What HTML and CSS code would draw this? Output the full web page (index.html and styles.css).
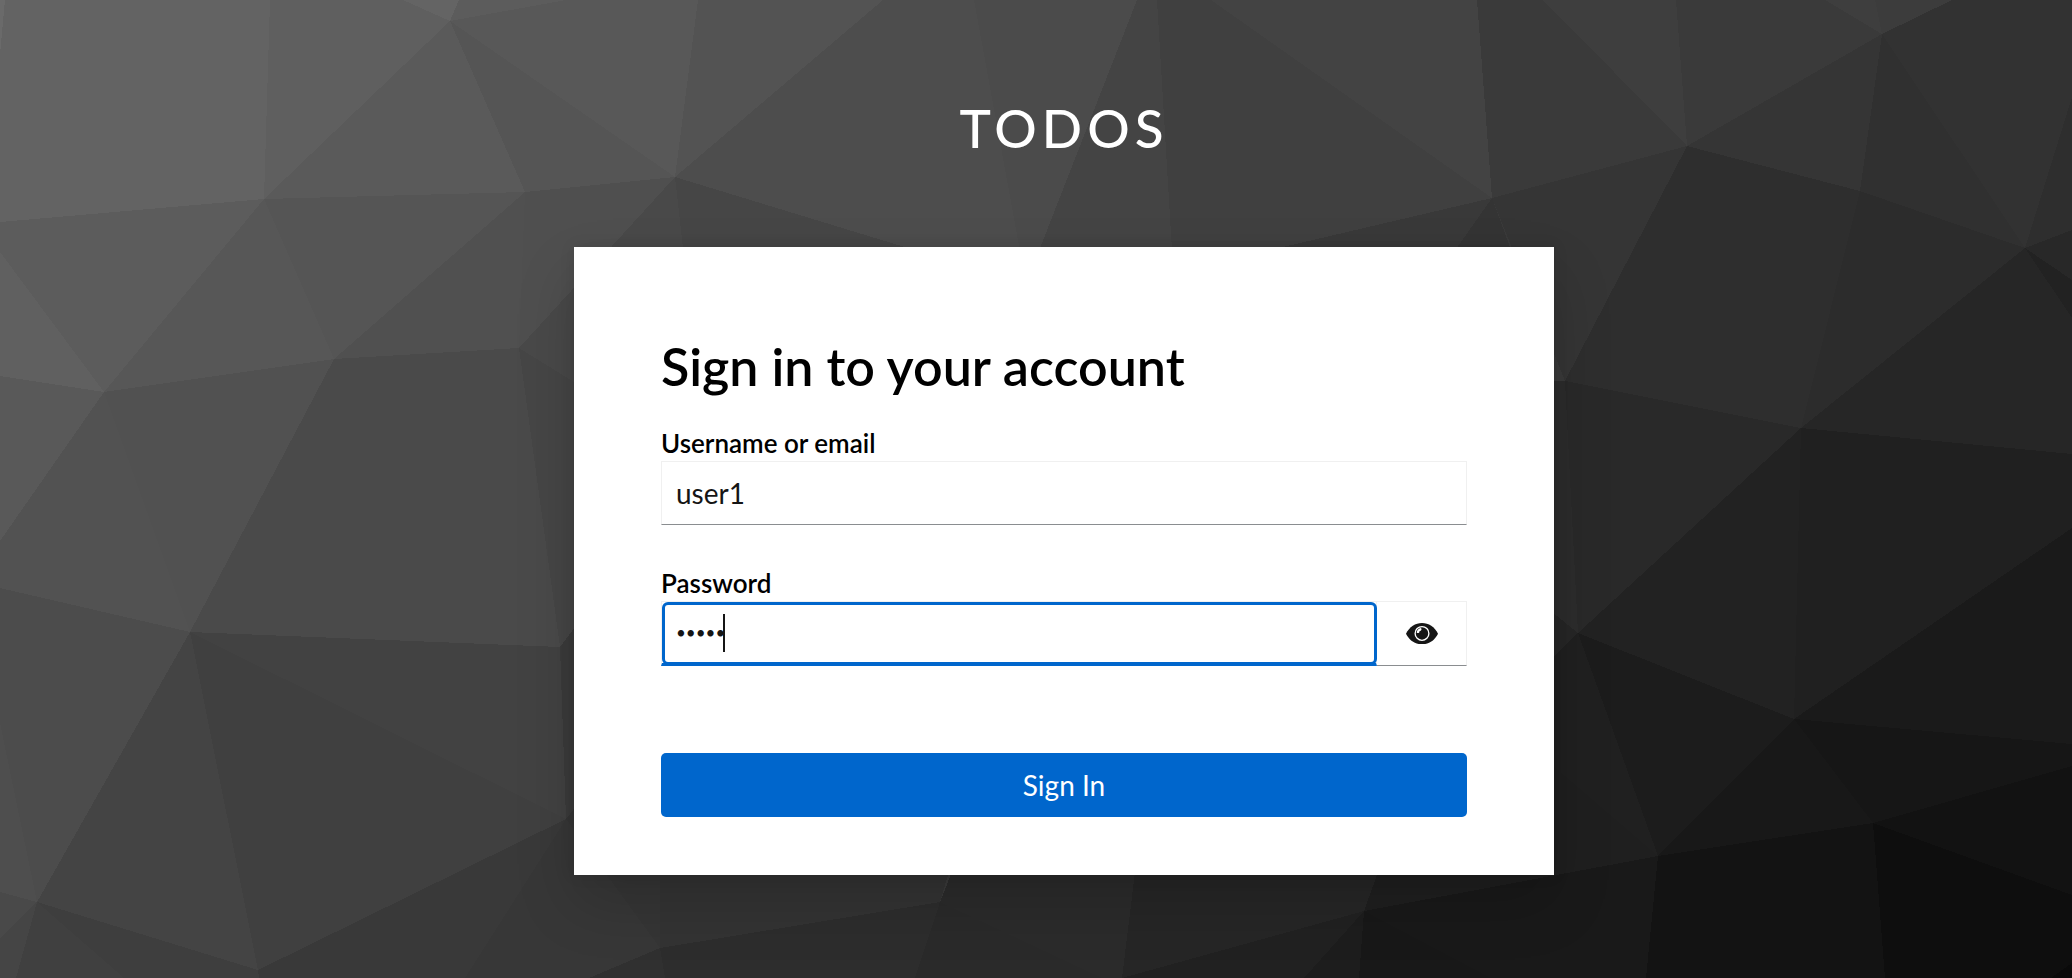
FILE: index.html
```html
<!DOCTYPE html>
<html lang="en">
<head>
<meta charset="utf-8">
<title>Sign in to TODOS</title>
<link rel="stylesheet" href="styles.css">
</head>
<body>
<svg class="backdrop" viewBox="0 0 2072 978" preserveAspectRatio="none" aria-hidden="true">
  <rect width="2072" height="978" fill="#3a3a3a"/>
  <g class="facets">
    <path fill="#636363" d="M0 0H270L264 199L0 222z"/>
    <path fill="#6a6a6a" d="M0 0H5L0 54z"/>
    <path fill="#5f5f5f" d="M270 0H403L450 21L264 199z"/>
    <path fill="#646464" d="M403 0H459L450 21z"/>
    <path fill="#5c5c5c" d="M459 0H566L450 21z"/>
    <path fill="#5a5a5a" d="M450 21L525 192L264 199z"/>
    <path fill="#555" d="M450 21L675 177L525 192z"/>
    <path fill="#585858" d="M450 21L566 0H698L675 177z"/>
    <path fill="#535353" d="M698 0H883L675 177z"/>
    <path fill="#4d4d4d" d="M883 0H974L1026 284L675 177z"/>
    <path fill="#4b4b4b" d="M974 0H1137L1026 284z"/>
    <path fill="#444" d="M1137 0H1157L1180 384L1026 284z"/>
    <path fill="#404040" d="M1157 0H1211L1492 198L1180 384z"/>
    <path fill="#434343" d="M1211 0H1477L1492 198z"/>
    <path fill="#3a3a3a" d="M1477 0H1543L1687 146L1492 198z"/>
    <path fill="#3e3e3e" d="M1543 0H1676L1687 146z"/>
    <path fill="#3a3a3a" d="M1676 0H1825L1882 34L1687 146z"/>
    <path fill="#3e3e3e" d="M1825 0H1875L1882 34z"/>
    <path fill="#3c3c3c" d="M1875 0H1952L1882 34z"/>
    <path fill="#323232" d="M1952 0H2072V97L2025 248L1882 34z"/>
    <path fill="#2e2e2e" d="M2072 97V230L2025 248z"/>
    <path fill="#303030" d="M1882 34L2025 248L1860 191z"/>
    <path fill="#353535" d="M1882 34L1860 191L1687 146z"/>
    <path fill="#5c5c5c" d="M0 222L264 199L104 392L0 252z"/>
    <path fill="#606060" d="M0 252L104 392L0 376z"/>
    <path fill="#595959" d="M0 376L104 392L0 541z"/>
    <path fill="#575757" d="M264 199L334 359L104 392z"/>
    <path fill="#555" d="M264 199L525 192L334 359z"/>
    <path fill="#505050" d="M525 192L519 348L334 359z"/>
    <path fill="#4f4f4f" d="M525 192L675 177L519 348z"/>
    <path fill="#494949" d="M675 177L685 247L700 500L519 348z"/>
    <path fill="#464646" d="M675 177L1026 284L700 400z"/>
    <path fill="#525252" d="M104 392L190 632L0 588V541z"/>
    <path fill="#515151" d="M104 392L334 359L190 632z"/>
    <path fill="#4a4a4a" d="M334 359L519 348L560 647L190 632z"/>
    <path fill="#464646" d="M519 348L700 460L560 647z"/>
    <path fill="#4c4c4c" d="M0 588L190 632L37 902L0 723z"/>
    <path fill="#4e4e4e" d="M0 723L37 902L0 892z"/>
    <path fill="#494949" d="M0 892L37 902L0 938z"/>
    <path fill="#454545" d="M0 938L37 902L16 978H0z"/>
    <path fill="#444" d="M190 632L258 970L37 902z"/>
    <path fill="#404040" d="M190 632L566 819L258 970z"/>
    <path fill="#424242" d="M190 632L560 647L566 819z"/>
    <path fill="#3b3b3b" d="M560 647L700 460V700L566 819z"/>
    <path fill="#404040" d="M37 902L124 978H16z"/>
    <path fill="#3e3e3e" d="M37 902L258 970L259 978H124z"/>
    <path fill="#393939" d="M258 970L566 819L465 978H259z"/>
    <path fill="#373737" d="M566 819L660 948L589 978H465z"/>
    <path fill="#353535" d="M566 819L660 700V948z"/>
    <path fill="#333" d="M660 700H1000L940 902L660 948z"/>
    <path fill="#303030" d="M660 948L665 978H589z"/>
    <path fill="#2d2d2d" d="M660 948L940 902L915 978H665z"/>
    <path fill="#2a2a2a" d="M940 902L1102 978H915z"/>
    <path fill="#2b2b2b" d="M940 902L1000 750H1150L1122 978H1102z"/>
    <path fill="#262626" d="M1150 750H1440L1364 911L1122 978z"/>
    <path fill="#212121" d="M1364 911L1304 978H1122z"/>
    <path fill="#1d1d1d" d="M1364 911L1359 978H1304z"/>
    <path fill="#181818" d="M1364 911L1658 856L1646 978H1359z"/>
    <path fill="#191919" d="M1364 911L1658 856L1646 978H1491z"/>
    <path fill="#1f1f1f" d="M1440 700L1554 765L1658 856L1364 911z"/>
    <path fill="#393939" d="M1492 198L1460 247H1283z"/>
    <path fill="#343434" d="M1492 198L1510 247V300H1420z"/>
    <path fill="#353535" d="M1492 198L1687 146L1565 381z"/>
    <path fill="#2e2e2e" d="M1687 146L1860 191L1801 428L1565 381z"/>
    <path fill="#2c2c2c" d="M1860 191L2025 248L1801 428z"/>
    <path fill="#262626" d="M2025 248L2072 318V454L1801 428z"/>
    <path fill="#222" d="M2025 248L2072 280V318z"/>
    <path fill="#282828" d="M2025 248L2072 230V280z"/>
    <path fill="#292929" d="M1565 381L1801 428L1578 633z"/>
    <path fill="#2c2c2c" d="M1565 381L1578 633L1500 570V381z"/>
    <path fill="#262626" d="M1578 633L1500 570V710z"/>
    <path fill="#222" d="M1801 428L1794 719L1578 633z"/>
    <path fill="#202020" d="M1801 428L2072 454V528L1794 719z"/>
    <path fill="#1a1a1a" d="M2072 528V744L1794 719z"/>
    <path fill="#1c1c1c" d="M1578 633L1794 719L1658 856z"/>
    <path fill="#202020" d="M1578 633L1658 856L1500 720V710z"/>
    <path fill="#181818" d="M1794 719L1873 823L1658 856z"/>
    <path fill="#161616" d="M1794 719L2072 744V766L1873 823z"/>
    <path fill="#121212" d="M2072 766V895L1873 823z"/>
    <path fill="#0e0e0e" d="M1873 823L2072 895V978H1885z"/>
    <path fill="#131313" d="M1658 856L1873 823L1885 978H1646z"/>
    <path fill="#0a0a0a" d="M2072 963V978H2051z"/>
  </g>
</svg>
<div class="page">
  <header class="brand">TODOS</header>
  <main class="card">
    <h1 class="title">Sign in to your account</h1>
    <form class="form">
      <div class="field">
        <label class="label" for="username">Username or email</label>
        <input class="input" id="username" type="text" value="user1">
      </div>
      <div class="field">
        <label class="label" for="password">Password</label>
        <div class="group">
          <div class="secret">
            <input class="input input-active" id="password" type="password" value="admin">
            <span class="caret"></span>
          </div>
          <button class="reveal" type="button" aria-label="Show password">
            <svg class="eye" viewBox="0 0 576 384" aria-hidden="true">
              <path d="M0 192C60 70 170 0 288 0s228 70 288 192C516 314 406 384 288 384S60 314 0 192z"/>
              <circle class="eye-ring" cx="288" cy="188" r="124"/>
              <path class="eye-glint" d="M270 92a96 96 0 0 0-78 80c20 20 54 8 50-24c34 0 48-34 28-56z"/>
            </svg>
          </button>
        </div>
      </div>
      <button class="submit" type="submit">Sign In</button>
    </form>
  </main>
</div>
</body>
</html>
```
FILE: styles.css
```css
* {
  box-sizing: border-box;
}

body {
  margin: 0;
  font-family: Lato, "Liberation Sans", sans-serif;
  font-size: 28px;
  color: #151515;
  background: #3a3a3a;
}

.backdrop {
  position: absolute;
  inset: 0;
  z-index: -1;
  width: 100%;
  height: 100%;
}

.facets {
  shape-rendering: crispEdges;
}

.page {
  display: flex;
  flex-direction: column;
  align-items: center;
  min-height: 100vh;
  padding: 96px 0 64px 56px;
}

.brand {
  margin-bottom: 87px;
  font-size: 53px;
  font-weight: 500;
  line-height: 64px;
  letter-spacing: 5px;
  color: #fff;
}

.card {
  width: 100%;
  max-width: 980px;
  padding: 87px 87px 58px;
  background: #fff;
  box-shadow: 0 28px 56px rgba(3, 3, 3, 0.16), 0 0 14px rgba(3, 3, 3, 0.1);
}

.title {
  margin: 0 0 28px;
  font-size: 52px;
  font-weight: 600;
  line-height: 64px;
  color: #000;
}

.form,
.field {
  display: flex;
  flex-direction: column;
}

.field {
  margin-bottom: 41px;
}

.label {
  font-size: 26px;
  font-weight: 600;
  line-height: 35px;
  color: #000;
}

.input {
  width: 100%;
  height: 64px;
  padding: 0 14px;
  border: 1px solid #f0f0f0;
  border-bottom-color: #8a8d90;
  border-radius: 0;
  outline: 0;
  background: #fff;
  font: inherit;
  color: inherit;
}

.group {
  display: flex;
  height: 65px;
}

.secret {
  position: relative;
  flex: 1;
}

.secret::after {
  content: "";
  position: absolute;
  inset: 1px 0 1px 1px;
  border: 3px solid #06c;
  border-radius: 6px;
  pointer-events: none;
}

.input-active {
  display: block;
  height: 65px;
  border-bottom: 3px solid #06c;
  font-size: 17px;
}

.caret {
  position: absolute;
  top: 13px;
  left: 62px;
  width: 2px;
  height: 38px;
  background: #151515;
}

.reveal {
  display: flex;
  align-items: center;
  justify-content: center;
  width: 90px;
  padding: 0;
  border: 1px solid #f0f0f0;
  border-left: 0;
  border-bottom-color: #8a8d90;
  background: #fff;
}

.eye {
  width: 32px;
  fill: #151515;
}

.eye-ring {
  fill: none;
  stroke: #fff;
  stroke-width: 24px;
}

.eye-glint {
  fill: #fff;
}

.submit {
  height: 64px;
  margin-top: 46px;
  padding: 0;
  border: 0;
  border-radius: 5px;
  background: #06c;
  font: inherit;
  color: #fff;
}
```
